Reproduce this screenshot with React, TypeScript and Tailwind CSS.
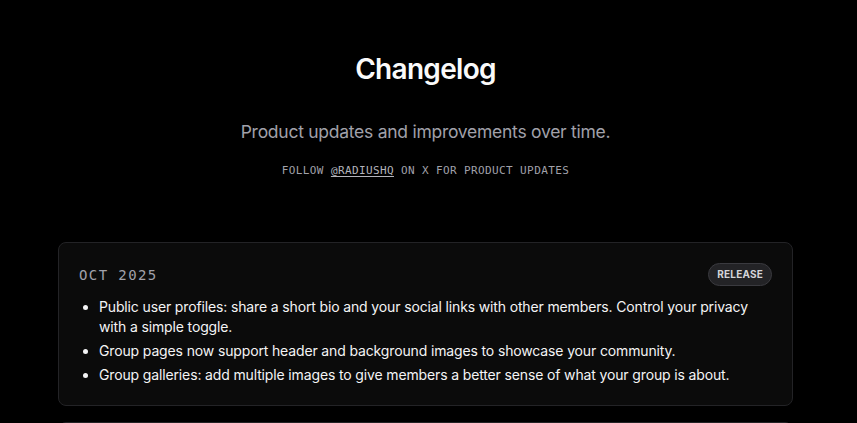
const items = [
  "Public user profiles: share a short bio and your social links with other members. Control your privacy with a simple toggle.",
  "Group pages now support header and background images to showcase your community.",
  "Group galleries: add multiple images to give members a better sense of what your group is about.",
];

export default function App() {
  return (
    <div className="min-h-screen bg-black font-['Inter',sans-serif] text-white">
      <div className="pl-[58px] pr-[64px]">
        <header className="flex flex-col items-center pt-[50px]">
          <h1 className="text-[28px] font-semibold leading-[38px] tracking-[-0.025em] text-[#fafafa]">
            Changelog
          </h1>
          <p className="mt-[31px] text-[17.5px] leading-[26px] tracking-[-0.015em] text-[#a1a1aa]">
            Product updates and improvements over time.
          </p>
          <p className="mt-[18px] font-['DejaVu_Sans_Mono',monospace] text-[11px] leading-[16px] tracking-[0.035em] text-[#a1a1aa]">
            FOLLOW{" "}
            <a href="#" className="text-[#b4b4bb] underline underline-offset-2">
              @RADIUSHQ
            </a>{" "}
            ON X FOR PRODUCT UPDATES
          </p>
        </header>

        <div className="mt-[63px] flex flex-col gap-4">
          <section className="rounded-lg border border-[#232326] bg-[#0b0b0b] px-5 pb-5 pt-5">
            <div className="flex items-center justify-between">
              <span className="font-['DejaVu_Sans_Mono',monospace] text-sm tracking-widest text-[#a1a1aa]">
                OCT 2025
              </span>
              <span className="rounded-full border border-[#3a3a3f] bg-[#232326] px-2 py-[4px] text-[10px] font-bold leading-[13px] tracking-[0.02em] text-[#d4d4d8]">
                RELEASE
              </span>
            </div>
            <ul className="mt-[11px] flex list-disc flex-col gap-1 pl-5 text-sm leading-5 tracking-[-0.01em] text-[#f4f4f5]">
              {items.map((item) => (
                <li key={item}>{item}</li>
              ))}
            </ul>
          </section>

          <section className="h-[120px] rounded-lg border border-[#232326] bg-[#0b0b0b]" />
        </div>
      </div>
    </div>
  );
}
